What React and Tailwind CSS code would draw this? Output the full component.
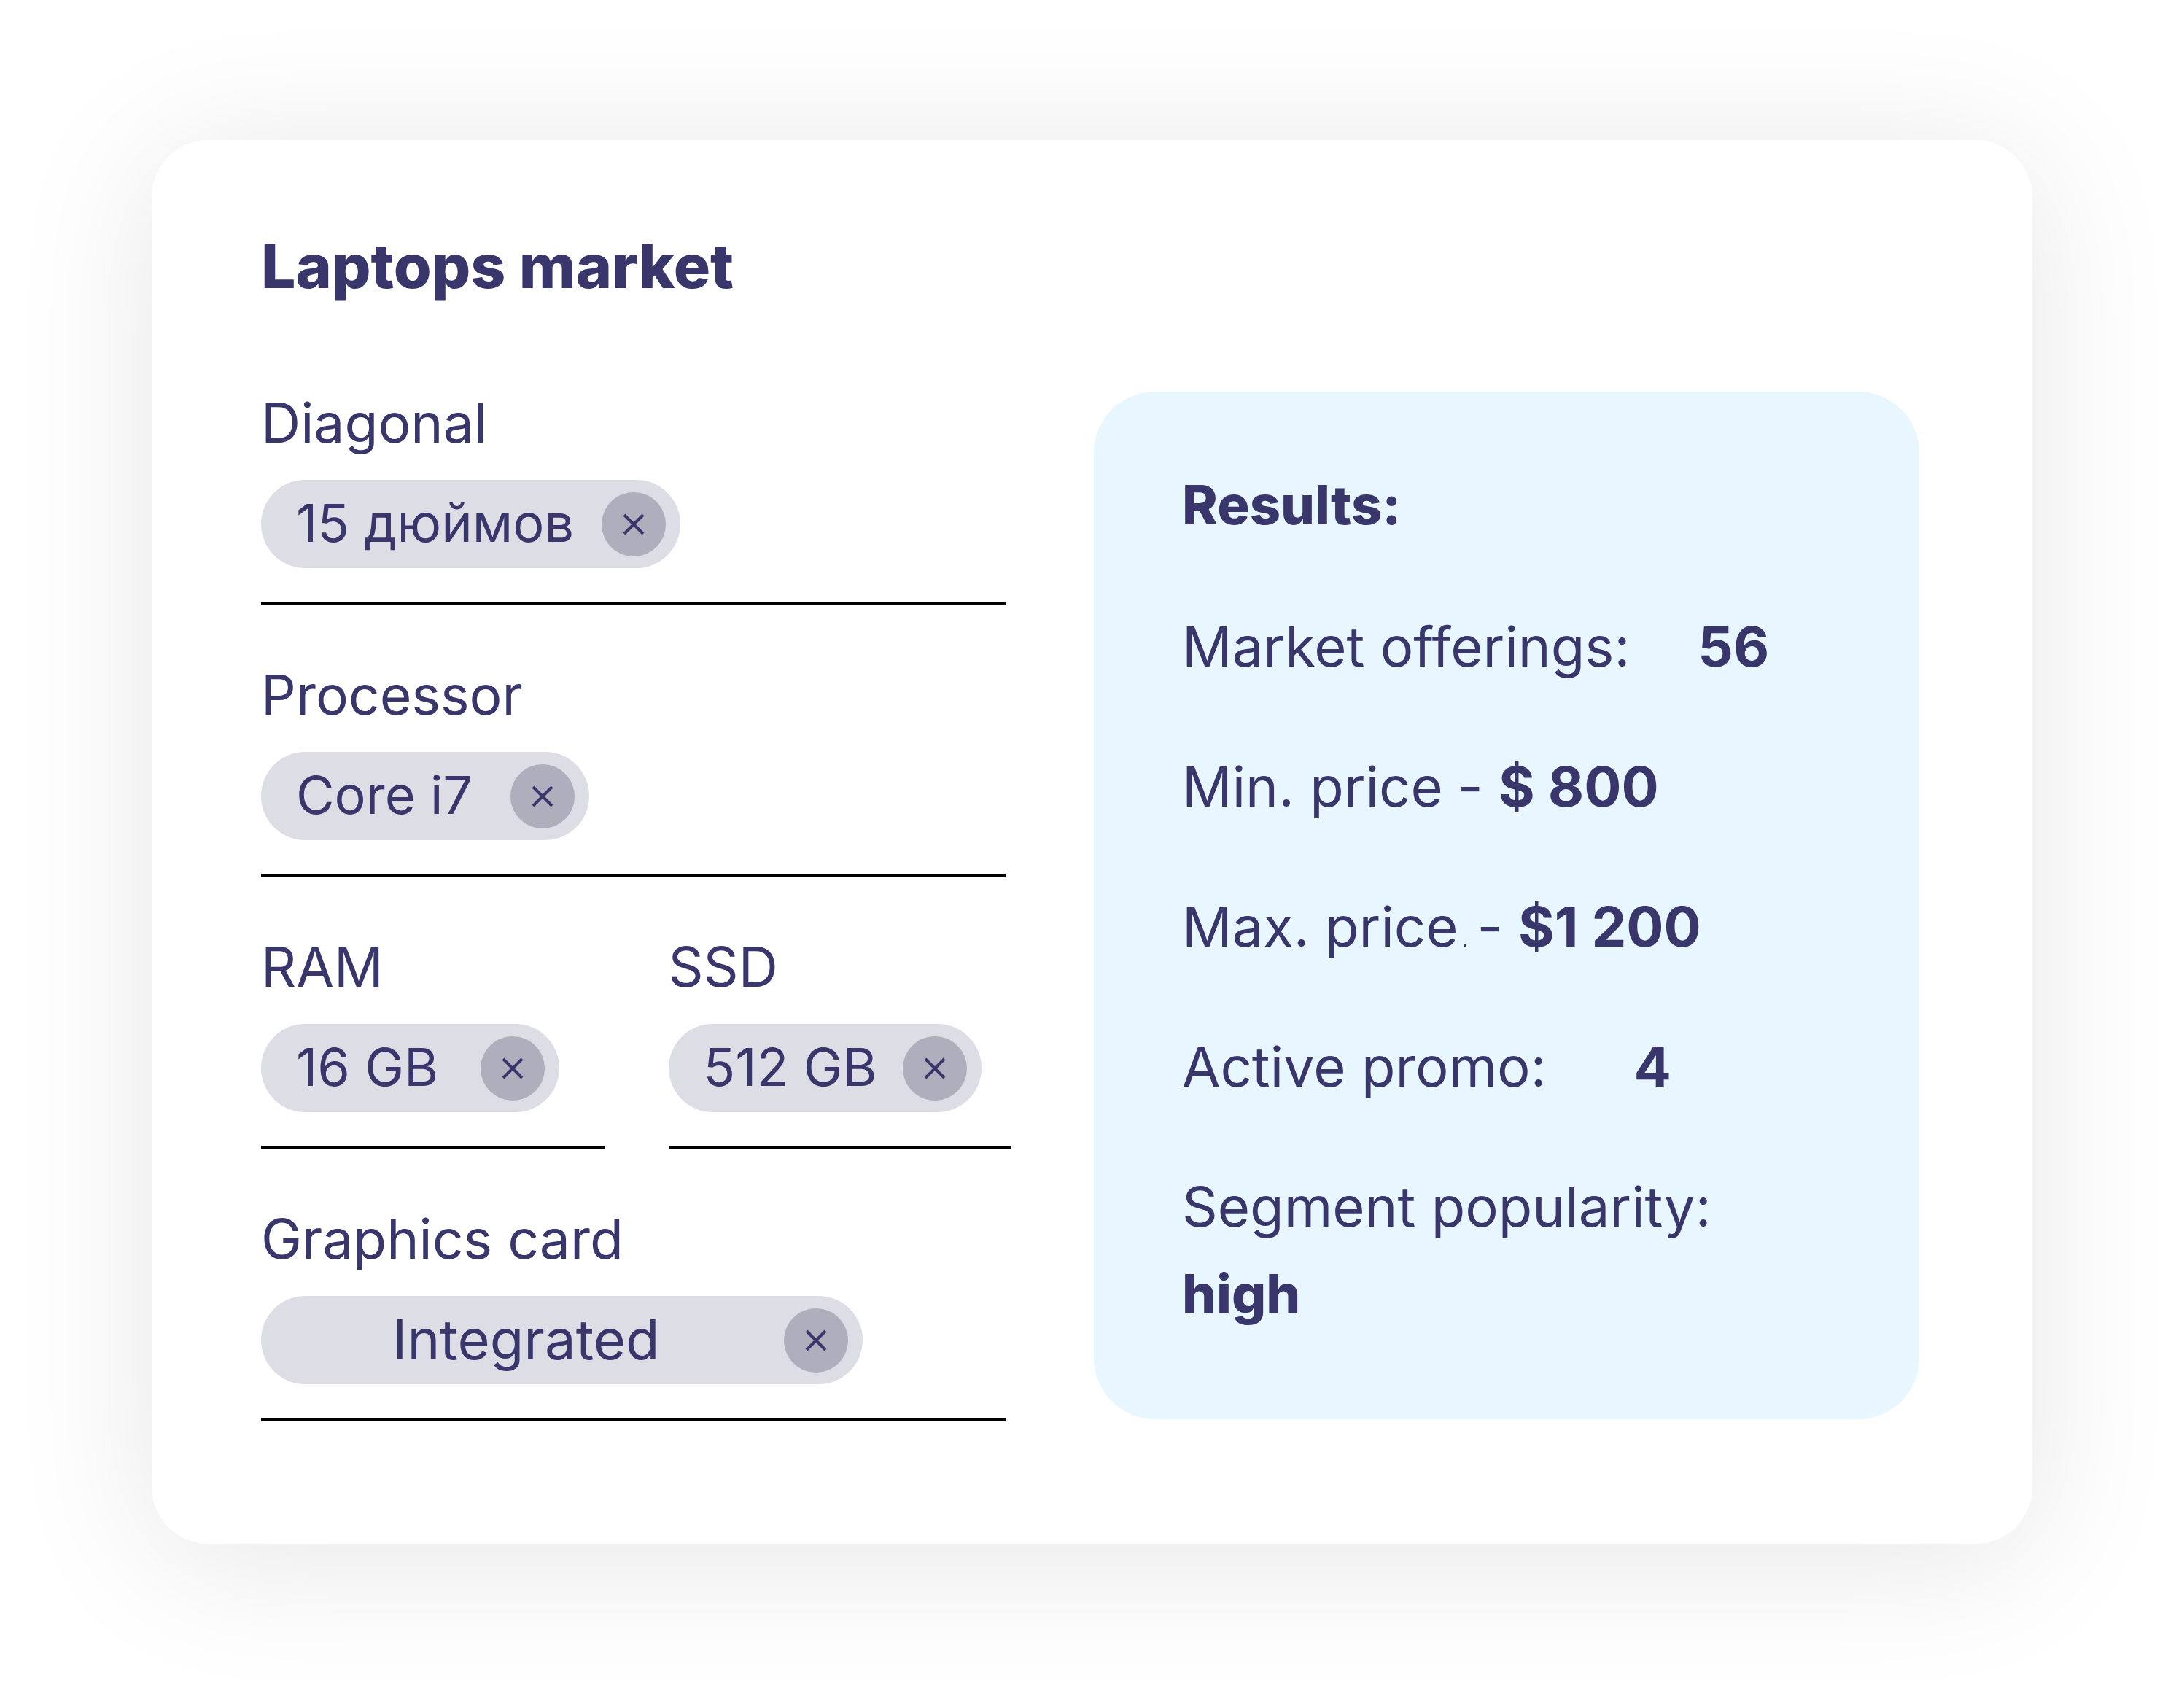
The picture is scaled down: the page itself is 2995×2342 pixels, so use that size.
function CloseIcon() {
  return (
    <svg viewBox="0 0 30 30" className="size-[30px]" fill="none" stroke="currentColor" strokeWidth="4" aria-hidden="true">
      <path d="M2 2 28 28M28 2 2 28" />
    </svg>
  );
}

function Field({ label, value, chipClass, className = "" }) {
  return (
    <section className={`border-b-5 border-black pb-[46px] ${className}`}>
      <h2 className="text-[75px] leading-[86px]">{label}</h2>
      <div className={`mt-[35px] flex h-[121px] max-w-full items-center justify-between rounded-full bg-[#dddde5] pr-5 ${chipClass}`}>
        <span className="pb-1 leading-none whitespace-nowrap">{value}</span>
        <button
          type="button"
          aria-label={`Remove ${value}`}
          className="flex size-[88px] shrink-0 items-center justify-center rounded-full bg-[#afaebc]"
        >
          <CloseIcon />
        </button>
      </div>
    </section>
  );
}

function Row({ label, children }) {
  return (
    <div className="flex items-baseline leading-24 whitespace-nowrap">
      <dt>{label}</dt>
      {children}
    </div>
  );
}

export default function App() {
  return (
    <main className="min-h-screen bg-white px-52 pt-48 pb-[225px] font-['Inter','Noto_Sans',sans-serif] text-[#38366b]">
      <article className="rounded-[78px] bg-white pt-[123px] pr-[155px] pb-42 pl-[150px] shadow-[0_20px_200px_rgba(0,0,0,0.1)]">
        <h1 className="text-[84px] leading-[100px] font-extrabold">Laptops market</h1>

        <div className="mt-[122px] grid grid-cols-[1029fr_1132fr] items-start gap-[113px]">
          <div className="flex flex-col gap-20">
            <Field label="Diagonal" value="15 дюймов" className="mr-2" chipClass="w-[575px] pl-12 text-[72px]" />
            <Field label="Processor" value="Core i7" className="mr-2" chipClass="w-[450px] pl-12 text-[72px]" />
            <div className="grid grid-cols-2 gap-22">
              <Field label="RAM" value="16 GB" chipClass="w-[409px] pl-12 text-[72px]" />
              <Field label="SSD" value="512 GB" chipClass="w-[429px] pl-12 text-[72px]" />
            </div>
            <Field label="Graphics card" value="Integrated" className="mr-2" chipClass="w-[825px] pl-[180px] text-[76px]" />
          </div>

          <section className="rounded-[84px] bg-[#e7f6ff] pt-[107px] pb-31 pl-[121px] text-[76px]">
            <h2 className="text-[74px] leading-24 font-extrabold">Results:</h2>
            <dl className="mt-[98px] flex flex-col gap-24">
              <Row label="Market offerings:">
                <dd className="ml-[93px] font-bold">56</dd>
              </Row>
              <Row label="Min. price">
                <dd className="ml-5">
                  - <b className="font-bold">$ 800</b>
                </dd>
              </Row>
              <Row label="Max. price">
                <dd className="ml-2">
                  <span className="mr-4 inline-block h-1 w-0.5 bg-current" />
                  - <b className="font-bold">$1 200</b>
                </dd>
              </Row>
              <Row label="Active promo:">
                <dd className="ml-30 font-bold">4</dd>
              </Row>
              <div className="flex flex-col gap-6 leading-24">
                <dt className="whitespace-nowrap">Segment popularity:</dt>
                <dd className="text-[74px] font-extrabold">high</dd>
              </div>
            </dl>
          </section>
        </div>
      </article>
    </main>
  );
}
